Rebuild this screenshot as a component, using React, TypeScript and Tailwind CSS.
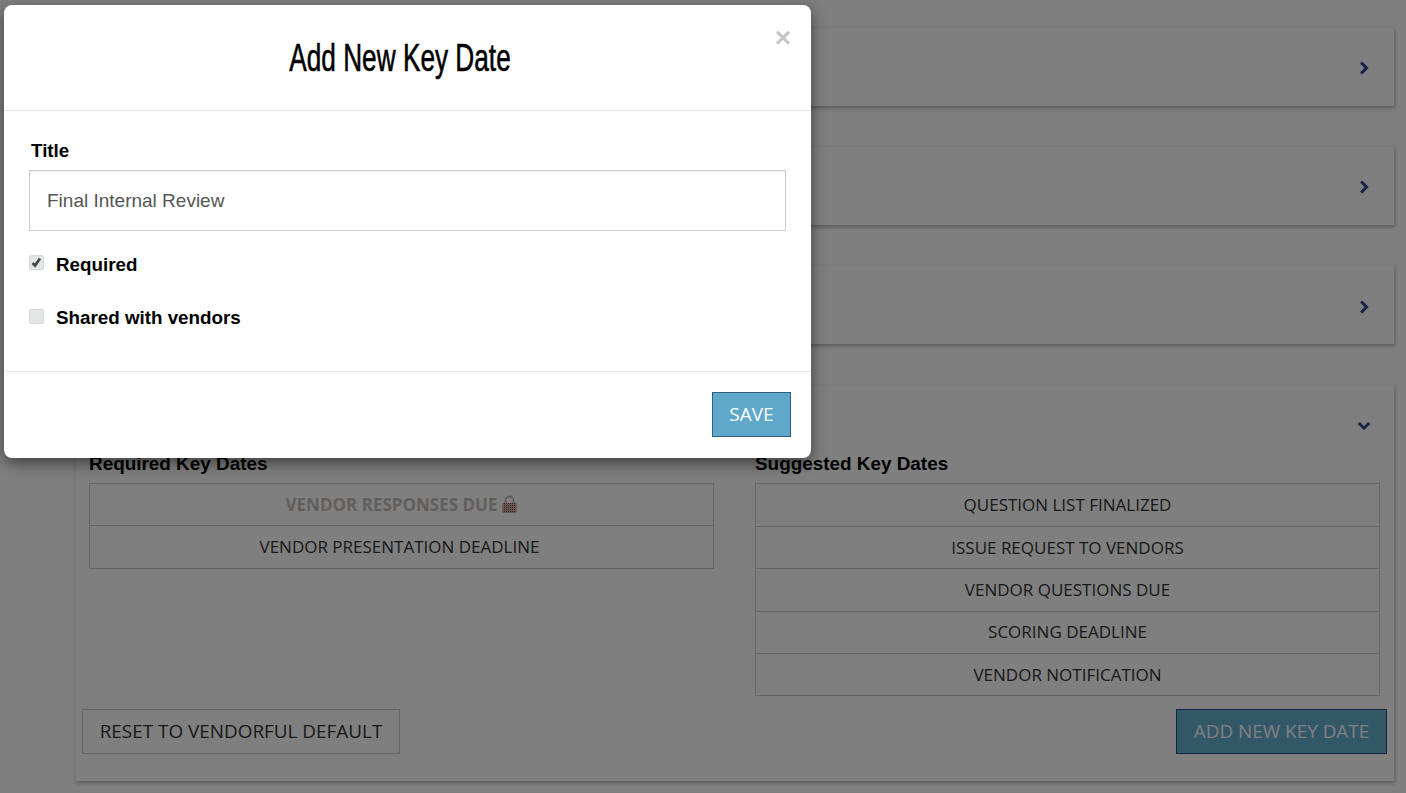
const SANS = "font-['Liberation_Sans',Arial,sans-serif]";
const OPEN = "font-['Open_Sans',sans-serif]";

const REQUIRED_ROWS = ['VENDOR PRESENTATION DEADLINE'];
const SUGGESTED_ROWS = [
  'QUESTION LIST FINALIZED',
  'ISSUE REQUEST TO VENDORS',
  'VENDOR QUESTIONS DUE',
  'SCORING DEADLINE',
  'VENDOR NOTIFICATION',
];

function Chevron({ down = false }: { down?: boolean }) {
  return (
    <svg width="14" height="14" viewBox="0 0 14 14" className="shrink-0">
      <polyline
        points={down ? '1.8,4 7,9.2 12.2,4' : '4.2,1.5 9.5,7 4.2,12.5'}
        fill="none"
        stroke="#2c4590"
        strokeWidth="3"
      />
    </svg>
  );
}

function CollapsedCard() {
  return (
    <div className="h-[79px] mb-10 flex items-center justify-end pt-[2px] pr-[23px] bg-white border-t border-l border-[#f2f2f2] shadow-[1px_2px_4px_rgba(0,0,0,0.3)]">
      <Chevron />
    </div>
  );
}

function DateRow({ label }: { label: string }) {
  return (
    <div className="h-[42.2px] flex items-center justify-center border-t border-[#ccc] first:border-t-0 text-[17px] text-[#333]">
      {label}
    </div>
  );
}

function LockIcon() {
  return (
    <svg width="15" height="19" viewBox="0 0 15 19" className="ml-[5px]">
      <defs>
        <pattern id="lock-dots" width="2" height="2" patternUnits="userSpaceOnUse">
          <rect width="2" height="2" fill="#c9b3a6" />
          <rect width="1" height="1" fill="#8a3a26" />
        </pattern>
      </defs>
      <path d="M3.5 9V5.5a4 4 0 0 1 8 0V9" fill="none" stroke="#c4bcb6" strokeWidth="2" />
      <rect x="0.5" y="8" width="14" height="10" rx="1" fill="url(#lock-dots)" />
    </svg>
  );
}

function ExpandedCard() {
  return (
    <div className="mt-[41px] h-[396px] pt-[33px] pl-[6px] pr-[7px] bg-white border-t border-l border-[#f2f2f2] shadow-[1px_2px_4px_rgba(0,0,0,0.3)]">
      <div className="flex justify-end pr-[16px]">
        <Chevron down />
      </div>
      <div className="mt-[21px] flex gap-[41px] pl-[7px]">
        <div className="w-[625px]">
          <h3 className={`${SANS} text-[18.9px] leading-[20px] font-bold text-black`}>Required Key Dates</h3>
          <div className={`${OPEN} mt-[9px] border border-[#ccc]`}>
            <div className="h-[41px] flex items-center justify-center text-[17px] font-bold text-[#c4bcb6]">
              VENDOR RESPONSES DUE
              <LockIcon />
            </div>
            <div className="border-t border-[#ccc] pr-[4px]">
              {REQUIRED_ROWS.map((row) => (
                <DateRow key={row} label={row} />
              ))}
            </div>
          </div>
        </div>
        <div className="w-[625px]">
          <h3 className={`${SANS} text-[18.9px] leading-[20px] font-bold text-black`}>Suggested Key Dates</h3>
          <div className={`${OPEN} mt-[9px] border border-[#ccc]`}>
            {SUGGESTED_ROWS.map((row) => (
              <DateRow key={row} label={row} />
            ))}
          </div>
        </div>
      </div>
      <div className={`${OPEN} mt-[13px] flex justify-between text-[18.9px]`}>
        <button className="w-[318px] h-[45px] border border-[#ccc] text-[#333]">RESET TO VENDORFUL DEFAULT</button>
        <button className="w-[211px] h-[45px] border border-[#2a4a8f] bg-[#64aecf] text-white">ADD NEW KEY DATE</button>
      </div>
    </div>
  );
}

function Checkbox({ checked = false, className = '' }: { checked?: boolean; className?: string }) {
  return (
    <span
      className={`w-[15px] h-[15px] rounded-[2px] border border-[#d5d9d9] bg-[#e2e6e6] flex items-center justify-center shrink-0 ${className}`}
    >
      {checked && (
        <svg width="13" height="13" viewBox="0 0 13 13">
          <polyline points="2.5,7 5,9.5 10,2.5" fill="none" stroke="#4a4a4a" strokeWidth="2.8" />
        </svg>
      )}
    </span>
  );
}

function KeyDateModal() {
  return (
    <div className="absolute left-[4px] top-[5px] w-[807px] h-[453px] flex flex-col rounded-[8px] bg-white shadow-[0_5px_15px_rgba(0,0,0,0.5)]">
      <div className="relative h-[106px] shrink-0 flex items-center pt-[2px] pl-[25px] pr-[40px] border-b border-[#e3eaea]">
        <h2 className={`${SANS} w-full text-center text-black text-[39px] scale-x-[0.672] [-webkit-text-stroke:0.6px_black]`}>
          Add New Key Date
        </h2>
        <span className={`${SANS} absolute right-[20px] top-[17px] text-[28px] leading-[32px] font-bold text-[#c6c6c6]`}>
          ×
        </span>
      </div>
      <div className={`${SANS} flex-1 pt-[30px] pl-[25px] pr-[25px]`}>
        <div className="pl-[2px] text-[18.8px] leading-[20px] font-bold text-black">Title</div>
        <input
          readOnly
          value="Final Internal Review"
          className="mt-[9px] w-full h-[61px] px-[17px] border border-[#ccc] text-[19px] text-[#555] shadow-[inset_0_1px_1px_rgba(0,0,0,0.075)] outline-none"
        />
        <div className="mt-[24px] flex items-center gap-[12px] text-[18.8px] leading-[20px] font-bold text-black">
          <Checkbox checked className="-mt-[6px]" />
          <span>Required</span>
        </div>
        <div className="mt-[33px] flex items-center gap-[12px] text-[18.8px] leading-[20px] font-bold text-black">
          <Checkbox className="-mt-[4px]" />
          <span>Shared with vendors</span>
        </div>
      </div>
      <div className="h-[87px] shrink-0 flex items-start justify-end pt-[20px] pr-[20px] border-t border-[#e3eaea]">
        <button className={`${OPEN} w-[79px] h-[45px] border border-[#2f5f7a] bg-[#5fa8ca] text-white text-[19px]`}>
          SAVE
        </button>
      </div>
    </div>
  );
}

export default function App() {
  return (
    <div className="relative w-[1406px] h-[793px] overflow-hidden bg-white">
      <div className="pt-[27px] pl-[75px] pr-[12px]">
        <CollapsedCard />
        <CollapsedCard />
        <div className="h-[79px] flex items-center justify-end pt-[4px] pr-[23px] bg-white border-t border-l border-[#f2f2f2] shadow-[1px_2px_4px_rgba(0,0,0,0.3)]">
          <Chevron />
        </div>
        <ExpandedCard />
      </div>
      <div className="absolute inset-0 bg-black/50" />
      <KeyDateModal />
    </div>
  );
}
